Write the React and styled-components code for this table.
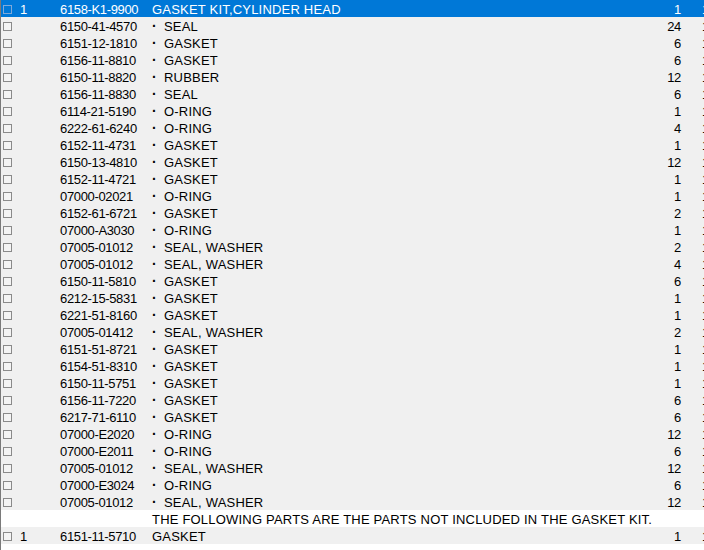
import React from "react";
import styled, { createGlobalStyle } from "styled-components";

const GlobalStyle = createGlobalStyle`
  html, body {
    margin: 0;
    padding: 0;
    background: #fff;
  }
  body {
    font-family: "Liberation Sans", Arial, sans-serif;
  }
`;

const parts = [
  { no: "1", part: "6158-K1-9900", name: "GASKET KIT,CYLINDER HEAD", qty: 1, top: true },
  { part: "6150-41-4570", name: "SEAL", qty: 24 },
  { part: "6151-12-1810", name: "GASKET", qty: 6 },
  { part: "6156-11-8810", name: "GASKET", qty: 6 },
  { part: "6150-11-8820", name: "RUBBER", qty: 12 },
  { part: "6156-11-8830", name: "SEAL", qty: 6 },
  { part: "6114-21-5190", name: "O-RING", qty: 1 },
  { part: "6222-61-6240", name: "O-RING", qty: 4 },
  { part: "6152-11-4731", name: "GASKET", qty: 1 },
  { part: "6150-13-4810", name: "GASKET", qty: 12 },
  { part: "6152-11-4721", name: "GASKET", qty: 1 },
  { part: "07000-02021", name: "O-RING", qty: 1 },
  { part: "6152-61-6721", name: "GASKET", qty: 2 },
  { part: "07000-A3030", name: "O-RING", qty: 1 },
  { part: "07005-01012", name: "SEAL, WASHER", qty: 2 },
  { part: "07005-01012", name: "SEAL, WASHER", qty: 4 },
  { part: "6150-11-5810", name: "GASKET", qty: 6 },
  { part: "6212-15-5831", name: "GASKET", qty: 1 },
  { part: "6221-51-8160", name: "GASKET", qty: 1 },
  { part: "07005-01412", name: "SEAL, WASHER", qty: 2 },
  { part: "6151-51-8721", name: "GASKET", qty: 1 },
  { part: "6154-51-8310", name: "GASKET", qty: 1 },
  { part: "6150-11-5751", name: "GASKET", qty: 1 },
  { part: "6156-11-7220", name: "GASKET", qty: 6 },
  { part: "6217-71-6110", name: "GASKET", qty: 6 },
  { part: "07000-E2020", name: "O-RING", qty: 12 },
  { part: "07000-E2011", name: "O-RING", qty: 6 },
  { part: "07005-01012", name: "SEAL, WASHER", qty: 12 },
  { part: "07000-E3024", name: "O-RING", qty: 6 },
  { part: "07005-01012", name: "SEAL, WASHER", qty: 12 },
  { note: "THE FOLLOWING PARTS ARE THE PARTS NOT INCLUDED IN THE GASKET KIT." },
  { no: "1", part: "6151-11-5710", name: "GASKET", qty: 1, top: true },
];

const List = styled.div`
  width: 704px;
  height: 550px;
  box-sizing: border-box;
  border-left: 1px solid #7a7a7a;
  overflow: hidden;
  background: #fff;
`;

const Row = styled.div`
  display: flex;
  align-items: center;
  height: 17px;
  width: 720px;
  white-space: nowrap;
  background: ${(p) => (p.selected ? "#0078d7" : p.note ? "#fff" : "#f0f0f0")};
  color: ${(p) => (p.selected ? "#fff" : "#000")};
`;

const CheckCell = styled.div`
  width: 19px;
  flex: none;
  display: flex;
  align-items: center;
  padding-left: 2px;
  padding-top: 1px;
  box-sizing: border-box;
`;

const Box = styled.span`
  width: 7px;
  height: 7px;
  border: 1px solid ${(p) => (p.selected ? "#7fa9d9" : "#8a8a8a")};
  background: ${(p) => (p.selected ? "#0078d7" : "#f4f4f4")};
`;

const Cell = styled.div`
  flex: none;
  width: ${(p) => p.w}px;
  height: 17px;
  font-size: 13px;
  line-height: 19px;
  letter-spacing: ${(p) => (p.tight ? "-0.35px" : "0.2px")};
  text-align: ${(p) => (p.right ? "right" : "left")};
  overflow: visible;
`;

const Bullet = styled.span`
  display: inline-block;
  width: 12px;
  margin-left: 0;
  font-size: 14px;
  font-weight: bold;
`;

const App = () => {
  return (
    <>
      <GlobalStyle />
      <List>
        {parts.map((item, i) =>
          item.note ? (
            <Row key={i} note>
              <CheckCell />
              <Cell w={40} />
              <Cell w={92} />
              <Cell w={560}>{item.note}</Cell>
            </Row>
          ) : (
            <Row key={i} selected={i === 0}>
              <CheckCell>
                <Box selected={i === 0} />
              </CheckCell>
              <Cell w={40} tight>
                {item.no || ""}
              </Cell>
              <Cell w={92} tight>
                {item.part}
              </Cell>
              <Cell w={420}>
                {item.top ? (
                  item.name
                ) : (
                  <>
                    <Bullet>·</Bullet>
                    {item.name}
                  </>
                )}
              </Cell>
              <Cell w={109} tight right>
                {item.qty}
              </Cell>
              <Cell w={21} />
              <Cell w={20} tight>
                1
              </Cell>
            </Row>
          )
        )}
      </List>
    </>
  );
};

export default App;
